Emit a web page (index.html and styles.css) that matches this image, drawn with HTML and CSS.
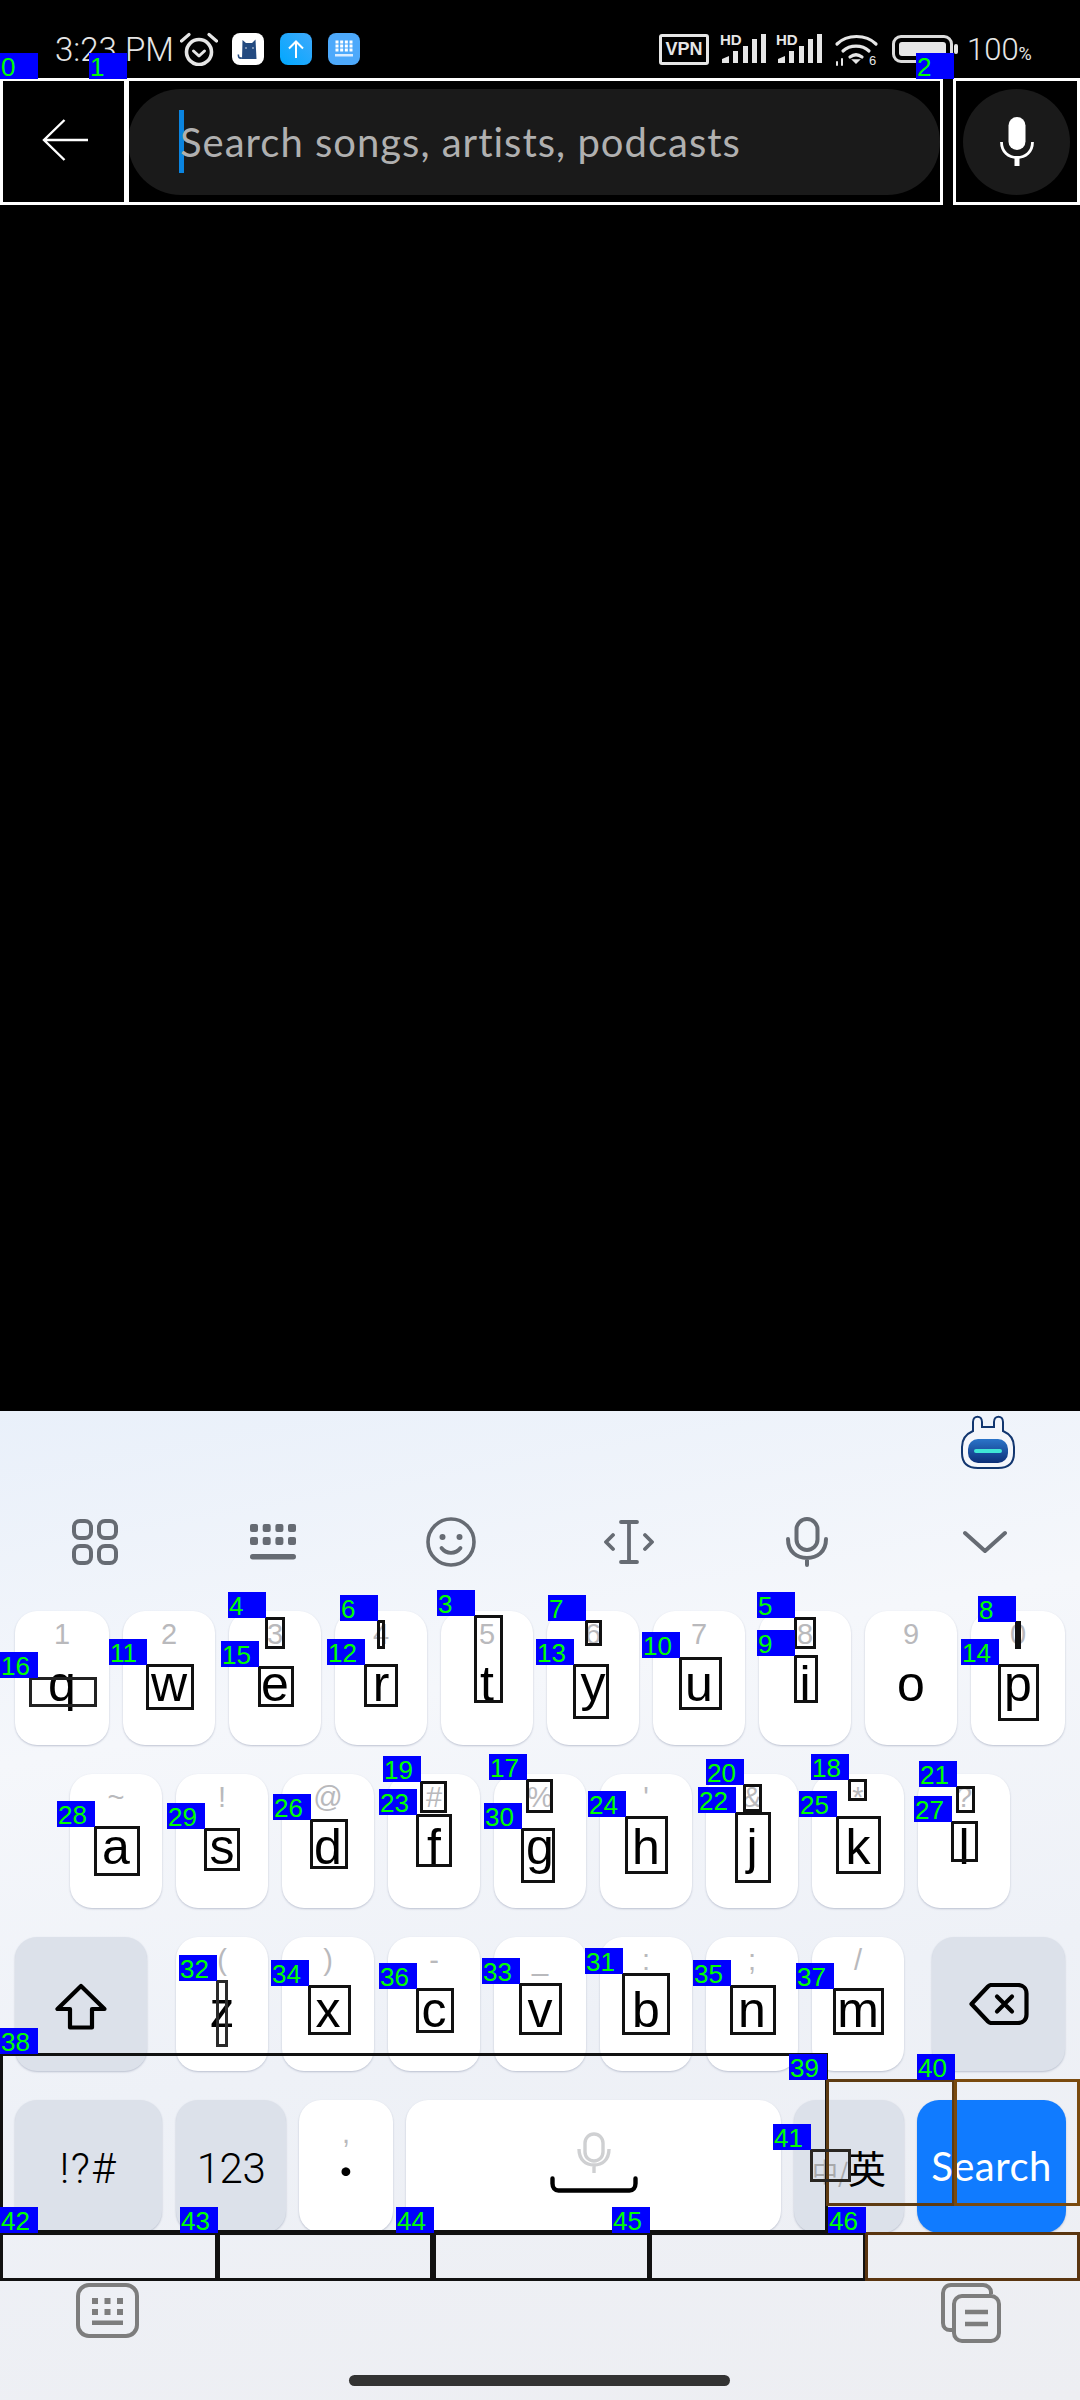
FILE: index.html
```html
<!DOCTYPE html>
<html lang="en">
<head>
    <meta charset="UTF-8">
    <meta name="viewport" content="width=device-width, initial-scale=1.0">
    <title>Search</title>
    <link rel="stylesheet" href="styles.css">
</head>
<body>
    <div class="status-bar">
        <span class="time">3:23 PM</span>
        <svg class="alarm" width="38" height="34" viewBox="0 0 38 34" fill="none" stroke="#e6e6e6">
            <circle cx="19" cy="20" r="12.5" stroke-width="3.6"/>
            <path d="M13.5 19l5.5 5 5.5-5" stroke-width="3" stroke-linecap="round" stroke-linejoin="round"/>
            <path d="M1.5 9L9 2.5M36.5 9L29 2.5" stroke-width="3.2" stroke-linecap="round"/>
        </svg>
        <svg class="tile" width="32" height="32" viewBox="0 0 32 32">
            <rect width="32" height="32" rx="8" fill="#fff"/>
            <path d="M10.5 7l3.5 3h6l3.500-3.500 1 19.500h-14.500z" fill="#234a80"/>
            <path d="M10 25c-3 .5-4-1-3.500-3.500" fill="none" stroke="#234a80" stroke-width="1.600"/>
            <path d="M13 15h2M20 15h2" stroke="#cfd8e6" stroke-width="1.200"/>
        </svg>
        <svg class="tile" width="32" height="32" viewBox="0 0 32 32">
            <defs>
                <linearGradient id="upload-bg" x1="1" y1="0" x2="0" y2="1">
                    <stop offset="0" stop-color="#3fa9fb"/>
                    <stop offset="1" stop-color="#00a8ff"/>
                </linearGradient>
            </defs>
            <rect width="32" height="32" rx="8" fill="url(#upload-bg)"/>
            <path d="M16 25V9M9 15.500L16 8.500l7 7" fill="none" stroke="#fff" stroke-width="2"/>
        </svg>
        <svg class="tile" width="32" height="32" viewBox="0 0 32 32">
            <rect width="32" height="32" rx="8" fill="#4da9fb"/>
            <path d="M7.500 9h17M7.500 13h17M7.500 17h17" stroke="#fff" stroke-width="3" stroke-dasharray="3 1.670"/>
            <rect x="7" y="21" width="18" height="2.500" fill="#d9ecff"/>
        </svg>

        <div class="status-right">
            <span class="vpn">VPN</span>
            <svg class="signal" width="47" height="30" viewBox="0 0 47 30">
                <text x="0" y="11" class="hd">HD</text>
                <path d="M2 29v-4l7-3v7zM13 29V17h5v12zM23 29V12h5v17zM32 29V5h5v24zM41 29V0h5v29z" fill="#e6e6e6"/>
            </svg>
            <svg class="signal" width="47" height="30" viewBox="0 0 47 30">
                <text x="0" y="11" class="hd">HD</text>
                <path d="M2 29v-4l7-3v7zM13 29V17h5v12zM23 29V12h5v17zM32 29V5h5v24zM41 29V0h5v29z" fill="#e6e6e6"/>
            </svg>
            <svg class="wifi" width="44" height="33" viewBox="0 0 44 33" fill="none" stroke="#e6e6e6" stroke-width="3.200" stroke-linecap="round">
                <path d="M2 11C12 1 31 1 41 11"/>
                <path d="M8 18c7-6.500 19-6.500 26 0"/>
                <path d="M15 24c4-3 8-3 12 0"/>
                <path d="M18 27l3 3 3-3z" fill="#e6e6e6" stroke-width="1.500"/>
                <path d="M2 32v-3M7 32v-6" stroke-width="2"/>
                <text x="34" y="32" class="wifi-six">6</text>
            </svg>
            <div class="battery"><div class="battery-fill"></div></div>
            <div class="battery-nub"></div>
            <span class="percent">100<small>%</small></span>
        </div>
    </div>

    <div class="search-row">
        <div class="back">
            <svg width="46" height="42" viewBox="0 0 46 42" fill="none" stroke="#fff" stroke-width="2.400">
                <path d="M46 21H2M22.500 1L2 21l20.500 20"/>
            </svg>
        </div>
        <div class="search-pill">
            <span class="caret"></span>
            <span class="placeholder">Search songs, artists, podcasts</span>
        </div>
        <div class="voice">
            <svg width="34" height="50" viewBox="0 0 34 50" fill="none">
                <rect x="8.500" y="0" width="17" height="33" rx="8.500" fill="#fff"/>
                <path d="M1.500 25c0 10 7 15.500 15.500 15.500S32.500 35 32.500 25" stroke="#fff" stroke-width="2.800"/>
                <path d="M17 40v9" stroke="#fff" stroke-width="5"/>
            </svg>
        </div>
    </div>

    <div class="page-body"></div>

    <div class="keyboard">
        <div class="assistant-row">
            <svg width="58" height="56" viewBox="0 0 58 56">
                <defs>
                    <linearGradient id="visor" x1="0" y1="0" x2="0" y2="1">
                        <stop offset="0" stop-color="#2b74c9"/>
                        <stop offset="1" stop-color="#0c2f78"/>
                    </linearGradient>
                </defs>
                <path d="M14 17V8c0-7 9-7 9 0v5h12V8c0-7 9-7 9 0v9c7 3 11 8 11 16v6c0 11-7 15-16 15H19C10 54 3 50 3 39v-6c0-8 4-13 11-16z" fill="#f4f6fb" stroke="#12366f" stroke-width="2"/>
                <rect x="9" y="25" width="40" height="24" rx="10" fill="url(#visor)"/>
                <rect x="15" y="35" width="28" height="4" rx="2" fill="#3fe6d6"/>
            </svg>
        </div>

        <div class="tools">
            <div class="tool">
                <svg width="46" height="46" viewBox="0 0 46 46" fill="none" stroke="#666b73" stroke-width="4">
                    <rect x="2" y="2" width="17" height="17" rx="6"/>
                    <rect x="27" y="2" width="17" height="17" rx="6"/>
                    <rect x="2" y="27" width="17" height="17" rx="6"/>
                    <rect x="27" y="27" width="17" height="17" rx="6"/>
                </svg>
            </div>
            <div class="tool">
                <svg width="46" height="36" viewBox="0 0 46 36" fill="#666b73">
                    <rect x="0" y="0" width="8" height="8" rx="2"/><rect x="12.700" y="0" width="8" height="8" rx="2"/><rect x="25.400" y="0" width="8" height="8" rx="2"/><rect x="38" y="0" width="8" height="8" rx="2"/>
                    <rect x="0" y="13" width="8" height="8" rx="2"/><rect x="12.700" y="13" width="8" height="8" rx="2"/><rect x="25.400" y="13" width="8" height="8" rx="2"/><rect x="38" y="13" width="8" height="8" rx="2"/>
                    <rect x="0" y="30" width="46" height="5.500" rx="2.700"/>
                </svg>
            </div>
            <div class="tool">
                <svg width="50" height="50" viewBox="0 0 50 50" fill="none" stroke="#666b73" stroke-width="3.600">
                    <circle cx="25" cy="25" r="23"/>
                    <circle cx="16.500" cy="20" r="3" fill="#666b73" stroke="none"/>
                    <circle cx="33.500" cy="20" r="3" fill="#666b73" stroke="none"/>
                    <path d="M15.500 31c5 6.500 14 6.500 19 0" stroke-width="3.800" stroke-linecap="round"/>
                </svg>
            </div>
            <div class="tool">
                <svg width="50" height="44" viewBox="0 0 50 44" fill="none" stroke="#666b73" stroke-width="3.800" stroke-linecap="round" stroke-linejoin="round">
                    <path d="M9 15l-7 7 7 7M41 15l7 7-7 7"/>
                    <path d="M25 2v40M17 2h16M17 42h16"/>
                </svg>
            </div>
            <div class="tool">
                <svg width="42" height="50" viewBox="0 0 42 50" fill="none" stroke="#666b73" stroke-width="4" stroke-linecap="round">
                    <rect x="10.500" y="2" width="21" height="31" rx="10.500"/>
                    <path d="M2 22c0 13 9 19 19 19s19-6 19-19M21 41v7"/>
                </svg>
            </div>
            <div class="tool">
                <svg width="44" height="24" viewBox="0 0 44 24" fill="none" stroke="#666b73" stroke-width="4" stroke-linecap="round" stroke-linejoin="round">
                    <path d="M2 3l20 18L42 3"/>
                </svg>
            </div>
        </div>

        <div class="key-rows">
            <div class="key-row row-top">
                <div class="key key-edge"><span class="hint">1</span><span class="letter">q</span></div>
                <div class="key"><span class="hint">2</span><span class="letter">w</span></div>
                <div class="key"><span class="hint">3</span><span class="letter">e</span></div>
                <div class="key"><span class="hint">4</span><span class="letter">r</span></div>
                <div class="key"><span class="hint">5</span><span class="letter">t</span></div>
                <div class="key"><span class="hint">6</span><span class="letter">y</span></div>
                <div class="key"><span class="hint">7</span><span class="letter">u</span></div>
                <div class="key"><span class="hint">8</span><span class="letter">i</span></div>
                <div class="key"><span class="hint">9</span><span class="letter">o</span></div>
                <div class="key key-edge"><span class="hint">0</span><span class="letter">p</span></div>
            </div>
            <div class="key-row row-home">
                <div class="key"><span class="hint">~</span><span class="letter">a</span></div>
                <div class="key"><span class="hint">!</span><span class="letter">s</span></div>
                <div class="key"><span class="hint">@</span><span class="letter">d</span></div>
                <div class="key"><span class="hint">#</span><span class="letter">f</span></div>
                <div class="key"><span class="hint">%</span><span class="letter">g</span></div>
                <div class="key"><span class="hint">'</span><span class="letter">h</span></div>
                <div class="key"><span class="hint">&amp;</span><span class="letter">j</span></div>
                <div class="key"><span class="hint">*</span><span class="letter">k</span></div>
                <div class="key"><span class="hint">?</span><span class="letter">l</span></div>
            </div>
            <div class="key-row row-bottom">
                <div class="key key-fn key-shift">
                    <svg width="52" height="48" viewBox="0 0 52 48" fill="none" stroke="#000" stroke-width="4.200" stroke-linejoin="round">
                        <path d="M26 3L2.500 26H15v18.500h22V26h12.500z"/>
                    </svg>
                </div>
                <div class="key"><span class="hint">(</span><span class="letter">z</span></div>
                <div class="key"><span class="hint">)</span><span class="letter">x</span></div>
                <div class="key"><span class="hint">-</span><span class="letter">c</span></div>
                <div class="key"><span class="hint">_</span><span class="letter">v</span></div>
                <div class="key"><span class="hint">:</span><span class="letter">b</span></div>
                <div class="key"><span class="hint">;</span><span class="letter">n</span></div>
                <div class="key"><span class="hint">/</span><span class="letter">m</span></div>
                <div class="key key-fn key-delete">
                    <svg width="60" height="42" viewBox="0 0 60 42" fill="none" stroke="#000" stroke-width="4.200" stroke-linecap="round" stroke-linejoin="round">
                        <path d="M2.500 21L19 3.500c1-1 2-1.500 3.500-1.500H49c5 0 8.500 3.500 8.500 8.500v21c0 5-3.500 8.500-8.500 8.500H22.500c-1.500 0-2.500-.5-3.500-1.500z"/>
                        <path d="M28 13.500l15 15M43 13.500l-15 15"/>
                    </svg>
                </div>
            </div>
            <div class="key-row row-space">
                <div class="key key-fn key-symbols"><span class="fn-label">!?#</span></div>
                <div class="key key-fn key-numbers"><span class="fn-label">123</span></div>
                <div class="key key-period"><span class="hint">,</span><span class="letter">.</span></div>
                <div class="key key-space">
                    <svg width="34" height="42" viewBox="0 0 34 42" fill="none" stroke="#cfd0d2" stroke-width="3.400">
                        <rect x="8" y="2" width="18" height="27" rx="9"/>
                        <path d="M2 17c0 11 7 16 15 16s15-5 15-16M17 33v8"/>
                    </svg>
                    <svg width="88" height="17" viewBox="0 0 88 17" fill="none" stroke="#000" stroke-width="4.400" stroke-linecap="round">
                        <path d="M2.500 2.500v5c0 4 2.500 7 6 7h71c3.500 0 6-3 6-7v-5"/>
                    </svg>
                </div>
                <div class="key key-fn key-lang"><span class="lang-off">中/</span><span class="lang-on">英</span></div>
                <div class="key key-search">Search</div>
            </div>
        </div>

        <div class="key-footer">
            <svg width="63" height="55" viewBox="0 0 63 55" fill="none">
                <rect x="2" y="2" width="59" height="51" rx="11" stroke="#7d7d7d" stroke-width="4"/>
                <path d="M16 15h6v6h-6zM28.500 15h6v6h-6zM41 15h6v6h-6zM16 26h6v6h-6zM28.500 26h6v6h-6zM41 26h6v6h-6zM16 37.500h31v4.500H16z" fill="#7d7d7d"/>
            </svg>
            <svg width="60" height="60" viewBox="0 0 60 60" fill="none" stroke="#7d7d7d" stroke-width="4">
                <path d="M11 47H9c-4 0-7-3-7-7V10c0-4 3-8 8-8h32c4 0 8 3 8 7v2"/>
                <rect x="13" y="13" width="45" height="45" rx="8"/>
                <path d="M24 29h23M24 41h23" stroke-width="4.500"/>
            </svg>
        </div>
        <div class="home-bar"></div>
    </div>

    <div class="overlay" id="overlay"></div>
    <script src="overlay.js"></script>
</body>
</html>
```

FILE: styles.css
```css
* {
    box-sizing: border-box;
}

body {
    margin: 0;
    width: 1080px;
    height: 2400px;
    position: relative;
    overflow: hidden;
    display: flex;
    flex-direction: column;
    background-color: #000000;
    font-family: "Lato", "Liberation Sans", sans-serif;
}

.status-bar {
    height: 78px;
    display: flex;
    align-items: center;
    padding: 20px 0 0 55px;
    color: #e6e6e6;
}

.time {
    width: 125px;
    font-family: "Roboto", sans-serif;
    font-size: 33px;
    font-weight: 300;
    white-space: nowrap;
}

.alarm {
    margin-right: 14px;
}

.tile {
    margin-right: 16px;
}

.status-right {
    display: flex;
    align-items: center;
    margin-left: 283px;
}

.vpn {
    width: 50px;
    height: 31px;
    margin-right: 11px;
    border: 3px solid #e6e6e6;
    border-radius: 3px;
    font-family: "Liberation Sans", sans-serif;
    font-size: 18px;
    font-weight: 700;
    line-height: 25px;
    text-align: center;
}

.signal {
    margin-right: 9px;
    overflow: visible;
}

.hd {
    font-family: "Liberation Sans", sans-serif;
    font-size: 15px;
    font-weight: 700;
    fill: #e6e6e6;
}

.wifi {
    margin: 0 13px 0 3px;
    overflow: visible;
}

.wifi-six {
    font-family: "Liberation Sans", sans-serif;
    font-size: 13px;
    fill: #e6e6e6;
    stroke: none;
}

.battery {
    width: 61px;
    height: 28px;
    padding: 4px;
    border: 3px solid #dcdcdc;
    border-radius: 9px;
}

.battery-fill {
    height: 100%;
    background-color: #e6e6e6;
    border-radius: 3px;
}

.battery-nub {
    width: 4px;
    height: 10px;
    margin: 0 9px 0 1px;
    background-color: #e6e6e6;
    border-radius: 2px;
}

.percent {
    font-family: "Roboto", sans-serif;
    font-size: 31px;
    font-weight: 300;
    white-space: nowrap;
}

.percent small {
    font-size: 18px;
    font-weight: 400;
}

.search-row {
    height: 127px;
    display: flex;
    align-items: center;
}

.back {
    width: 128px;
    display: flex;
    justify-content: center;
    padding: 0 0 3px 2px;
}

.search-pill {
    width: 812px;
    height: 106px;
    display: flex;
    align-items: center;
    padding-left: 51px;
    background-color: #1a1a1a;
    border-radius: 53px;
}

.caret {
    width: 5px;
    height: 63px;
    margin-right: -4px;
    margin-top: -1px;
    background-color: #0a84e0;
}

.placeholder {
    font-size: 40px;
    letter-spacing: 1px;
    color: #b0b0b0;
    white-space: nowrap;
}

.voice {
    width: 107px;
    height: 106px;
    margin-left: 23px;
    display: flex;
    align-items: center;
    justify-content: center;
    background-color: #1a1a1a;
    border-radius: 50%;
}

.page-body {
    flex: 1;
}

.keyboard {
    height: 989px;
    display: flex;
    flex-direction: column;
    background: linear-gradient(170deg, #e9f0fa 0%, #f5f7fb 30%, #eef1f7 60%, #edeef2 100%);
}

.assistant-row {
    height: 90px;
    display: flex;
    justify-content: flex-end;
    padding: 3px 63px 0 0;
}

.tools {
    height: 82px;
    margin-left: 6px;
    display: grid;
    grid-template-columns: repeat(6, 178px);
    align-items: center;
    justify-items: center;
}

.tool {
    display: flex;
}

.key-rows {
    margin-top: 28px;
    display: flex;
    flex-direction: column;
    gap: 29px;
}

.key-row {
    height: 134px;
    display: flex;
    gap: 14px;
    padding-left: 15px;
}

.row-home {
    padding-left: 70px;
}

.row-space {
    height: 133px;
    gap: 13px;
}

.key {
    width: 92px;
    display: flex;
    flex-direction: column;
    align-items: center;
    padding-top: 8px;
    background-color: #ffffff;
    border-radius: 22px;
    box-shadow: 0 1px 2px rgba(110, 120, 150, 0.4);
}

.key-edge {
    width: 94px;
}

.hint {
    height: 30px;
    font-family: "Liberation Sans", sans-serif;
    font-size: 29px;
    line-height: 30px;
    color: #b9b9bc;
}

.letter {
    margin-top: 10px;
    font-family: "Liberation Sans", sans-serif;
    font-size: 50px;
    line-height: 50px;
    color: #000000;
}

.key-fn {
    justify-content: center;
    padding-top: 0;
    background-color: #dce1ea;
}

.key-shift {
    width: 132px;
    margin-right: 15px;
    padding-top: 6px;
}

.key-delete {
    width: 133px;
    margin-left: 14px;
}

.key-symbols {
    width: 147px;
    margin-right: 1px;
}

.key-numbers {
    width: 110px;
}

.fn-label {
    padding-top: 4px;
    font-family: "Roboto", sans-serif;
    font-size: 42px;
    font-weight: 300;
    letter-spacing: -0.5px;
    color: #000000;
}

.key-symbols .fn-label {
    letter-spacing: 1.5px;
}

.key-period {
    width: 94px;
    padding-top: 23px;
}

.key-period .hint {
    height: 20px;
    line-height: 20px;
}

.key-period .letter {
    margin-top: 1px;
    font-family: "Lato", sans-serif;
    font-size: 58px;
    font-weight: 700;
    line-height: 20px;
}

.key-space {
    width: 375px;
    align-items: center;
    justify-content: flex-start;
    padding-top: 32px;
    gap: 2px;
}

.key-lang {
    width: 110px;
    flex-direction: row;
    align-items: flex-end;
    padding: 0 0 44px;
    font-family: "Noto Sans CJK SC", sans-serif;
}

.lang-off {
    font-size: 26px;
    color: #a8a9ab;
}

.lang-on {
    font-size: 38px;
    line-height: 44px;
    color: #000000;
}

.key-search {
    width: 149px;
    align-items: center;
    justify-content: center;
    padding: 0 0 2px;
    background-color: #107bff;
    font-size: 40px;
    letter-spacing: 0.5px;
    color: #ffffff;
}

.key-footer {
    display: flex;
    justify-content: space-between;
    padding: 50px 79px 0 76px;
}

.home-bar {
    width: 381px;
    height: 11px;
    margin: 32px 0 0 349px;
    background-color: #333333;
    border-radius: 6px;
}

.overlay {
    position: absolute;
    top: 0;
    left: 0;
    width: 1080px;
    height: 2400px;
    pointer-events: none;
}

.mark-box {
    position: absolute;
    border: 3px solid #111111;
}

.mark-label {
    position: absolute;
    width: 38px;
    height: 26px;
    padding-left: 1px;
    background-color: #0000ff;
    font-family: "Liberation Sans", sans-serif;
    font-size: 26px;
    line-height: 29px;
    color: #00ff00;
}
```

FILE: overlay.js
```js
// x, y, width, height of each numbered box, in order; optional border colour
const WHITE = '#ffffff';
const marks = [
    [0, 78, 127, 127, WHITE], [126, 78, 817, 127, WHITE], [953, 78, 127, 127, WHITE],
    [474, 1615, 29, 88], [265, 1617, 20, 32], [794, 1617, 22, 32], [377, 1620, 8, 29],
    [585, 1620, 17, 26], [1015, 1621, 3, 28], [794, 1655, 24, 48], [679, 1657, 43, 53],
    [146, 1664, 48, 46], [364, 1664, 34, 43], [573, 1664, 36, 55], [998, 1664, 41, 57],
    [258, 1666, 36, 41], [29, 1677, 68, 30, '#222222'], [526, 1779, 27, 34], [848, 1779, 19, 22],
    [420, 1781, 27, 32], [743, 1784, 19, 28], [956, 1786, 19, 27], [735, 1812, 36, 71],
    [416, 1814, 36, 53], [625, 1816, 43, 58], [836, 1816, 45, 58], [310, 1819, 38, 50],
    [951, 1821, 27, 41], [94, 1826, 46, 50], [204, 1828, 36, 43], [521, 1828, 34, 55],
    [622, 1973, 48, 62], [216, 1980, 12, 67, '#2a2a2a'], [519, 1983, 43, 52], [308, 1985, 43, 50],
    [730, 1985, 46, 50], [416, 1988, 38, 45], [833, 1988, 51, 47], [0, 2053, 828, 180],
    [826, 2079, 129, 127, '#5e3b12'], [954, 2079, 126, 127, '#7a4a0e'], [810, 2149, 41, 33, '#2a2622'],
    [0, 2232, 218, 49], [217, 2232, 216, 49], [433, 2232, 217, 49], [649, 2232, 217, 49],
    [865, 2232, 215, 49, '#5a3510']
];

const overlay = document.getElementById('overlay');

marks.forEach((mark, index) => {
    const [x, y, w, h, color] = mark;

    const box = document.createElement('div');
    box.className = 'mark-box';
    box.style.left = x + 'px';
    box.style.top = y + 'px';
    box.style.width = w + 'px';
    box.style.height = h + 'px';
    if (color) box.style.borderColor = color;
    overlay.appendChild(box);

    const label = document.createElement('div');
    label.className = 'mark-label';
    label.innerText = index;
    label.style.left = Math.max(0, x - 37) + 'px';
    label.style.top = Math.max(0, y - 25) + 'px';
    overlay.appendChild(label);
});
```
